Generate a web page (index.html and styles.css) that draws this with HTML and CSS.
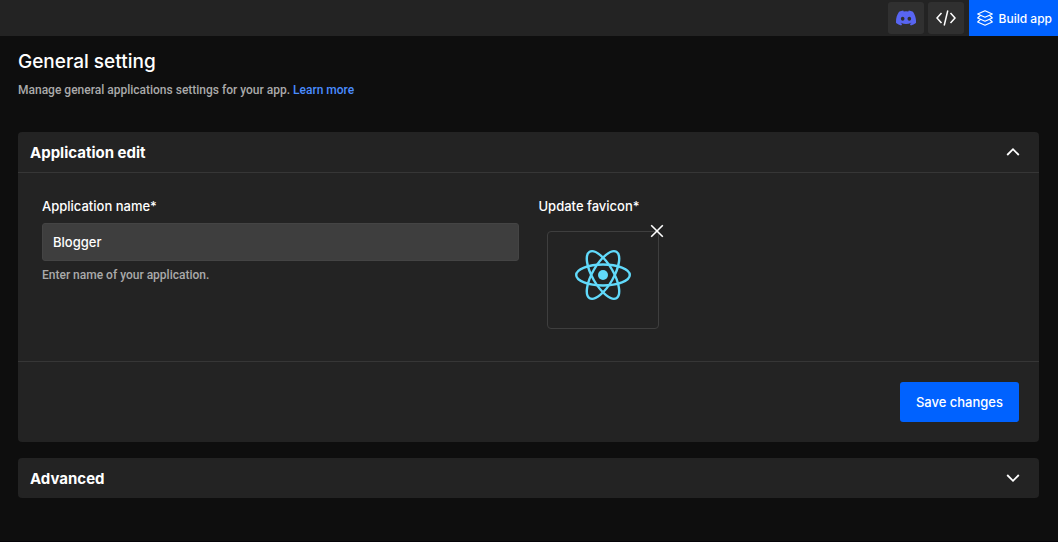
FILE: index.html
```html
<!DOCTYPE html>
<html lang="en">
<head>
<meta charset="utf-8">
<meta name="viewport" content="width=device-width, initial-scale=1">
<title>General setting</title>
<link rel="stylesheet" href="styles.css">
</head>
<body>
<header class="topbar">
  <div class="tools">
    <button class="tool" type="button" aria-label="Discord">
      <svg width="20" height="16" viewBox="0 0 127 96" fill="#5865f2"><path d="M107.7 8.07A105.15 105.15 0 0 0 81.47 0a72.06 72.06 0 0 0-3.36 6.83 97.68 97.68 0 0 0-29.11 0A72.37 72.37 0 0 0 45.64 0a105.89 105.89 0 0 0-26.25 8.09C2.79 32.65-1.71 56.6.54 80.21a105.73 105.73 0 0 0 32.17 16.15 77.7 77.7 0 0 0 6.89-11.11 68.42 68.42 0 0 1-10.85-5.18c.91-.66 1.8-1.34 2.66-2a75.57 75.57 0 0 0 64.32 0c.87.71 1.76 1.39 2.66 2a68.68 68.68 0 0 1-10.87 5.19 77 77 0 0 0 6.89 11.1 105.25 105.25 0 0 0 32.19-16.14c2.64-27.38-4.51-51.11-18.9-72.15ZM42.45 65.69C36.18 65.69 31 60 31 53s5-12.74 11.43-12.74S54 46 53.89 53s-5.05 12.69-11.44 12.69Zm42.24 0C78.41 65.69 73.25 60 73.25 53s5-12.74 11.44-12.74S96.23 46 96.12 53s-5.04 12.69-11.43 12.69Z"/></svg>
    </button>
    <button class="tool" type="button" aria-label="View code">
      <svg width="20" height="16" viewBox="0 0 20 16" fill="none" stroke="#fff" stroke-width="1.5"><path d="M5.5 3 1 8l4.500 5M14.500 3 19 8l-4.500 5M11.800.5 8.200 15.500"/></svg>
    </button>
  </div>
  <button class="build" type="button">
    <svg width="16" height="16" viewBox="0 0 16 16" fill="none" stroke="#fff" stroke-width="1.200" stroke-linejoin="round"><path d="M8 .8 15.300 4 8 7.200.7 4ZM3.500 5.300.7 8 8 11.200 15.300 8 12.500 5.300M3.500 9.300.7 12 8 15.200 15.300 12 12.500 9.300"/></svg>
    <span>Build app</span>
  </button>
</header>
<main class="page">
  <h1 class="title">General setting</h1>
  <p class="intro">Manage general applications settings for your app. <a class="link" href="#">Learn more</a></p>

  <form class="card">
    <button class="card-head" type="button" aria-expanded="true">
      <span>Application edit</span>
      <svg width="14" height="14" viewBox="0 0 14 14" fill="none" stroke="#fff" stroke-width="1.800"><path d="M1.200 10 7 4.200 12.800 10"/></svg>
    </button>
    <div class="fields">
      <div class="field">
        <label class="label" for="app-name">Application name*</label>
        <input class="input" id="app-name" type="text" value="Blogger">
        <p class="hint">Enter name of your application.</p>
      </div>
      <div class="field">
        <span class="label">Update favicon*</span>
        <div class="preview">
          <svg width="56" height="52" viewBox="-28 -26 56 52" fill="none" stroke="#61dafb" stroke-width="2.400"><circle r="5" fill="#61dafb" stroke="none"/><ellipse rx="26.800" ry="10.500"/><ellipse rx="26.800" ry="10.500" transform="rotate(60)"/><ellipse rx="26.800" ry="10.500" transform="rotate(120)"/></svg>
          <button class="remove" type="button" aria-label="Remove favicon">
            <svg width="14" height="14" viewBox="0 0 14 14" fill="none" stroke="#fff" stroke-width="1.600"><path d="m1.200 1.200 11.600 11.600M12.800 1.200 1.200 12.800"/></svg>
          </button>
        </div>
      </div>
    </div>
    <div class="actions"><button class="save" type="submit">Save changes</button></div>
  </form>

  <section class="card">
    <button class="card-head" type="button" aria-expanded="false">
      <span>Advanced</span>
      <svg width="14" height="14" viewBox="0 0 14 14" fill="none" stroke="#fff" stroke-width="1.800"><path d="M1.200 4 7 9.800 12.800 4"/></svg>
    </button>
  </section>
</main>
</body>
</html>
```
FILE: styles.css
```css
* {
  box-sizing: border-box;
}

body {
  margin: 0;
  background: #0e0e0e;
  color: #fff;
  font-family: Inter, "Liberation Sans", sans-serif;
  font-size: 13px;
  font-weight: 500;
}

button {
  border: 0;
  padding: 0;
  color: inherit;
  font: inherit;
  cursor: pointer;
}

svg {
  display: block;
  flex: none;
}

.topbar {
  display: flex;
  justify-content: flex-end;
  height: 36px;
  background: #232323;
}

.tools {
  display: flex;
  align-items: center;
  gap: 4px;
  padding-right: 5px;
}

.tool {
  display: grid;
  place-items: center;
  width: 36px;
  height: 32px;
  border-radius: 3px;
  background: #303030;
}

.build {
  display: flex;
  align-items: center;
  gap: 6px;
  padding: 0 6px 0 8px;
  background: #0062ff;
  font-size: 12px;
}

.page {
  min-height: calc(100vh - 36px);
  padding: 12px 19px 24px 18px;
  border-bottom: 1px solid #050308;
}

.title {
  margin: 0;
  font-size: 19px;
  font-weight: 500;
  line-height: 28px;
}

.intro {
  margin: 4px 0 32px;
  color: #aaa;
  font-family: Roboto, "Liberation Sans", sans-serif;
  font-size: 12px;
  line-height: 20px;
}

.link {
  color: #4a8cff;
  text-decoration: none;
}

.card {
  margin-bottom: 16px;
  border-radius: 4px;
  background: #232323;
}

.card-head {
  display: flex;
  align-items: center;
  justify-content: space-between;
  width: 100%;
  height: 40px;
  padding: 0 19px 0 12px;
  background: none;
  font-size: 15px;
  font-weight: 700;
}

.fields {
  display: grid;
  grid-template-columns: 1fr 1fr;
  gap: 20px;
  padding: 24px 24px 32px;
  border-top: 1px solid #363636;
}

.label {
  display: block;
  margin-bottom: 8px;
  line-height: 18px;
}

.input {
  display: block;
  width: 100%;
  height: 38px;
  padding: 0 10px;
  border: 1px solid #444;
  border-radius: 3px;
  background: #3e3e3e;
  color: #fff;
  font: inherit;
}

.hint {
  margin: 4px 0 0;
  color: #aaa;
  font-family: Roboto, "Liberation Sans", sans-serif;
  font-size: 12px;
  line-height: 20px;
}

.preview {
  position: relative;
  display: grid;
  place-items: center;
  width: 112px;
  height: 98px;
  margin: 16px 0 0 8px;
  padding-bottom: 10px;
  border: 1px solid #3e3e3e;
  border-radius: 4px;
}

.remove {
  position: absolute;
  top: -8px;
  right: -6px;
  background: none;
}

.actions {
  display: flex;
  justify-content: flex-end;
  padding: 20px;
  border-top: 1px solid #363636;
}

.save {
  height: 40px;
  padding: 0 16px;
  border-radius: 3px;
  background: #0062ff;
}
```
